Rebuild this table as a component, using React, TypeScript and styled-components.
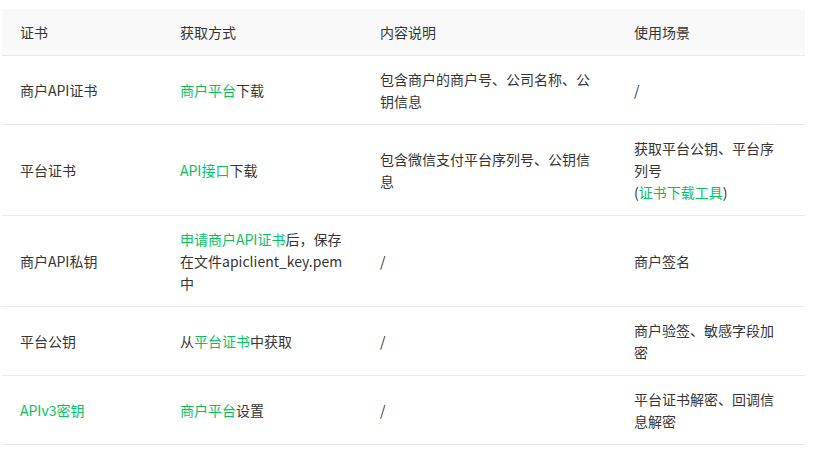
import styled, { createGlobalStyle } from "styled-components";
import { ReactNode } from "react";

const GlobalStyle = createGlobalStyle`
  html, body {
    margin: 0;
    padding: 0;
    background: #fff;
  }
  body {
    font-family: "Noto Sans CJK SC", "Noto Sans", sans-serif;
    color: #353535;
  }
`;

const Page = styled.div`
  padding: 9px 0 0 2px;
`;

const Table = styled.table`
  width: 803px;
  border-collapse: collapse;
  table-layout: fixed;
  font-size: 14px;
  line-height: 22px;
`;

const HeadRow = styled.tr`
  background: #f9f9f9;
`;

const HeadCell = styled.th`
  text-align: left;
  font-weight: normal;
  padding: 12px 18px;
  border-bottom: 1px solid #e8e8e8;
  vertical-align: middle;
`;

const Cell = styled.td`
  padding: 12px 18px;
  border-bottom: 1px solid #e8e8e8;
  vertical-align: middle;
  word-break: break-all;
`;

const Link = styled.span`
  color: #07c160;
`;

const columns = [
  { title: "证书", width: 160 },
  { title: "获取方式", width: 200 },
  { title: "内容说明", width: 254 },
  { title: "使用场景", width: 189 },
];

const rows: ReactNode[][] = [
  [
    "商户API证书",
    <><Link>商户平台</Link>下载</>,
    "包含商户的商户号、公司名称、公钥信息",
    "/",
  ],
  [
    "平台证书",
    <><Link>API接口</Link>下载</>,
    "包含微信支付平台序列号、公钥信息",
    <>获取平台公钥、平台序列号<br />(<Link>证书下载工具</Link>)</>,
  ],
  [
    "商户API私钥",
    <><Link>申请商户API证书</Link>后，保存在文件apiclient_key.pem中</>,
    "/",
    "商户签名",
  ],
  [
    "平台公钥",
    <>从<Link>平台证书</Link>中获取</>,
    "/",
    "商户验签、敏感字段加密",
  ],
  [
    <Link>APIv3密钥</Link>,
    <><Link>商户平台</Link>设置</>,
    "/",
    "平台证书解密、回调信息解密",
  ],
];

export default function App() {
  return (
    <Page>
      <GlobalStyle />
      <Table>
        <colgroup>
          {columns.map(c => (
            <col key={c.title} style={{ width: c.width }} />
          ))}
        </colgroup>
        <thead>
          <HeadRow>
            {columns.map(c => (
              <HeadCell key={c.title}>{c.title}</HeadCell>
            ))}
          </HeadRow>
        </thead>
        <tbody>
          {rows.map((row, i) => (
            <tr key={i}>
              {row.map((cell, j) => (
                <Cell key={j}>{cell}</Cell>
              ))}
            </tr>
          ))}
        </tbody>
      </Table>
    </Page>
  );
}
